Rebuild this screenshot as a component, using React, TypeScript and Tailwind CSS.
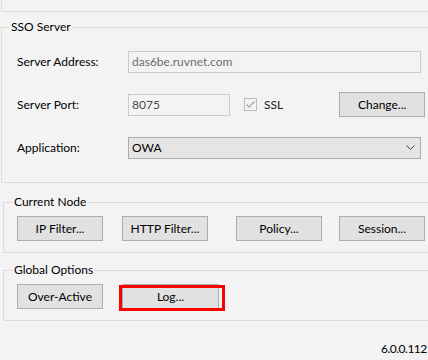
import { ReactNode } from "react";

function Btn({ children, className = "" }: { children: ReactNode; className?: string }) {
  return (
    <div
      className={`flex h-[25px] w-[86px] shrink-0 items-center justify-center border border-[#adadad] bg-[#e1e1e1] text-black ${className}`}
    >
      {children}
    </div>
  );
}

function Legend({ children, className = "" }: { children: ReactNode; className?: string }) {
  return <legend className={`px-[2px] leading-[16px] text-black ${className}`}>{children}</legend>;
}

export default function App() {
  return (
    <div
      className="relative h-[360px] w-[428px] overflow-hidden bg-[#f3f3f3] text-[12px] text-black"
      style={{ fontFamily: '"Segoe UI", Lato, sans-serif' }}
    >
      <div className="ml-[1px] h-[12px] w-[460px] border-b border-l border-[#dcdcdc]" />

      {/* SSO Server */}
      <fieldset className="ml-[1px] mt-[7px] w-[460px] border border-[#dcdcdc] pb-[23px] pl-[15px] pt-[16px]">
        <Legend className="-ml-[8px]">SSO Server</Legend>
        <div className="flex h-[22px] items-center">
          <div className="w-[111px]">Server Address:</div>
          <div className="flex h-[22px] w-[293px] items-center border border-[#cccccc] px-[3px] text-[#6d6d6d]">
            das6be.ruvnet.com
          </div>
        </div>
        <div className="mt-[19px] flex h-[25px] items-center">
          <div className="w-[111px]">Server Port:</div>
          <div className="flex h-[22px] w-[102px] items-center border border-[#cccccc] px-[3px] text-[#4a4a4a]">
            8075
          </div>
          <div className="ml-[14px] flex h-[13px] w-[13px] items-center justify-center border border-[#bcbcbc]">
            <svg width="11" height="11" viewBox="0 0 11 11">
              <polyline points="1.5,5.5 4,8 9.5,2.5" fill="none" stroke="#a8a8a8" strokeWidth="1.3" />
            </svg>
          </div>
          <div className="ml-[7px] text-[#222]">SSL</div>
          <Btn className="ml-[56px]">Change...</Btn>
        </div>
        <div className="mt-[20px] flex h-[22px] items-center">
          <div className="w-[111px]">Application:</div>
          <div className="flex h-[22px] w-[293px] items-center justify-between border border-[#acacac] bg-[#e5e5e5] pl-[3px] pr-[5px]">
            <span>OWA</span>
            <svg width="9" height="6" viewBox="0 0 9 6">
              <polyline points="0.5,0.5 4.5,4.5 8.5,0.5" fill="none" stroke="#444" strokeWidth="1" />
            </svg>
          </div>
        </div>
      </fieldset>

      {/* Current Node */}
      <fieldset className="ml-[3px] mt-[11px] w-[460px] border border-[#dcdcdc] pb-[11px] pl-[13px] pt-[6px]">
        <Legend className="-ml-[5px]">Current Node</Legend>
        <div className="flex">
          <Btn>IP Filter...</Btn>
          <Btn className="ml-[19px]">HTTP Filter...</Btn>
          <Btn className="ml-[28px]">Policy...</Btn>
          <Btn className="ml-[17px]">Session...</Btn>
        </div>
      </fieldset>

      {/* Global Options */}
      <fieldset className="ml-[3px] mt-[9px] w-[460px] border border-[#dcdcdc] pb-[11px] pl-[13px] pt-[6px]">
        <Legend className="-ml-[5px]">Global Options</Legend>
        <div className="flex">
          <Btn>Over-Active</Btn>
          <div className="relative ml-[19px]">
            <Btn className="w-[97px]">Log...</Btn>
            <div className="absolute left-[-3px] top-[1px] h-[26px] w-[106px] border-[3px] border-[#ff0000]" />
          </div>
        </div>
      </fieldset>

      <div className="mt-[19px] whitespace-nowrap pl-[381px] tracking-[-0.5px]">6.0.0.112</div>
    </div>
  );
}
